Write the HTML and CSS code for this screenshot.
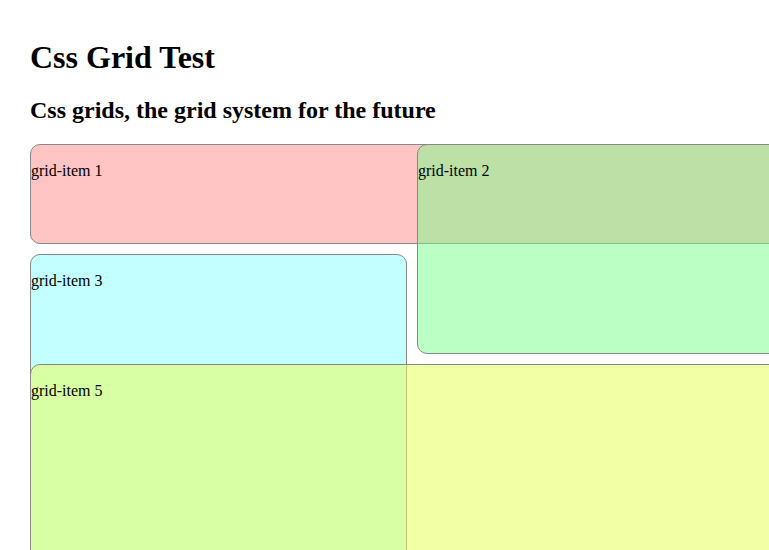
FILE: index.html
```html
<!DOCTYPE html>
<html lang="en">
<head>
<meta charset="utf-8">
<title>Css Grid Test</title>
<link rel="stylesheet" href="styles.css">
</head>
<body>
<h1 class="title">Css Grid Test</h1>
<h2 class="subtitle">Css grids, the grid system for the future</h2>
<div class="grid">
  <div class="item item-1"><p>grid-item 1</p></div>
  <div class="item item-2"><p>grid-item 2</p></div>
  <div class="item item-3"><p>grid-item 3</p></div>
  <div class="item item-5"><p>grid-item 5</p></div>
</div>
</body>
</html>
```
FILE: styles.css
```css
html {
  overflow: hidden;
}
body {
  margin: 0;
  padding: 18px 30px;
  font-family: "Liberation Serif", "Times New Roman", serif;
  color: #000;
  background: #fff;
}
.title {
  font-size: 32px;
  margin: 21px 0 21px;
}
.subtitle {
  font-size: 24px;
  margin: 21px 0 20px;
}
.grid {
  display: grid;
  grid-template-columns: 377px 377px 377px;
  grid-template-rows: 100px 100px 100px 100px;
  gap: 10px;
  width: 1151px;
}
.item {
  border: 1px solid #888;
  border-radius: 10px;
  font-size: 16px;
}
.item p {
  margin: 17px 0 15px;
}
.item-1 {
  grid-column: 1 / 4;
  grid-row: 1;
  background: rgba(255, 0, 0, 0.23);
}
.item-2 {
  grid-column: 2 / 4;
  grid-row: 1 / 3;
  background: rgba(114, 255, 131, 0.475);
}
.item-3 {
  grid-column: 1;
  grid-row: 2 / 5;
  background: rgba(0, 255, 255, 0.23);
}
.item-5 {
  grid-column: 1 / 4;
  grid-row: 3 / 5;
  background: rgba(232, 255, 92, 0.56);
}
```
